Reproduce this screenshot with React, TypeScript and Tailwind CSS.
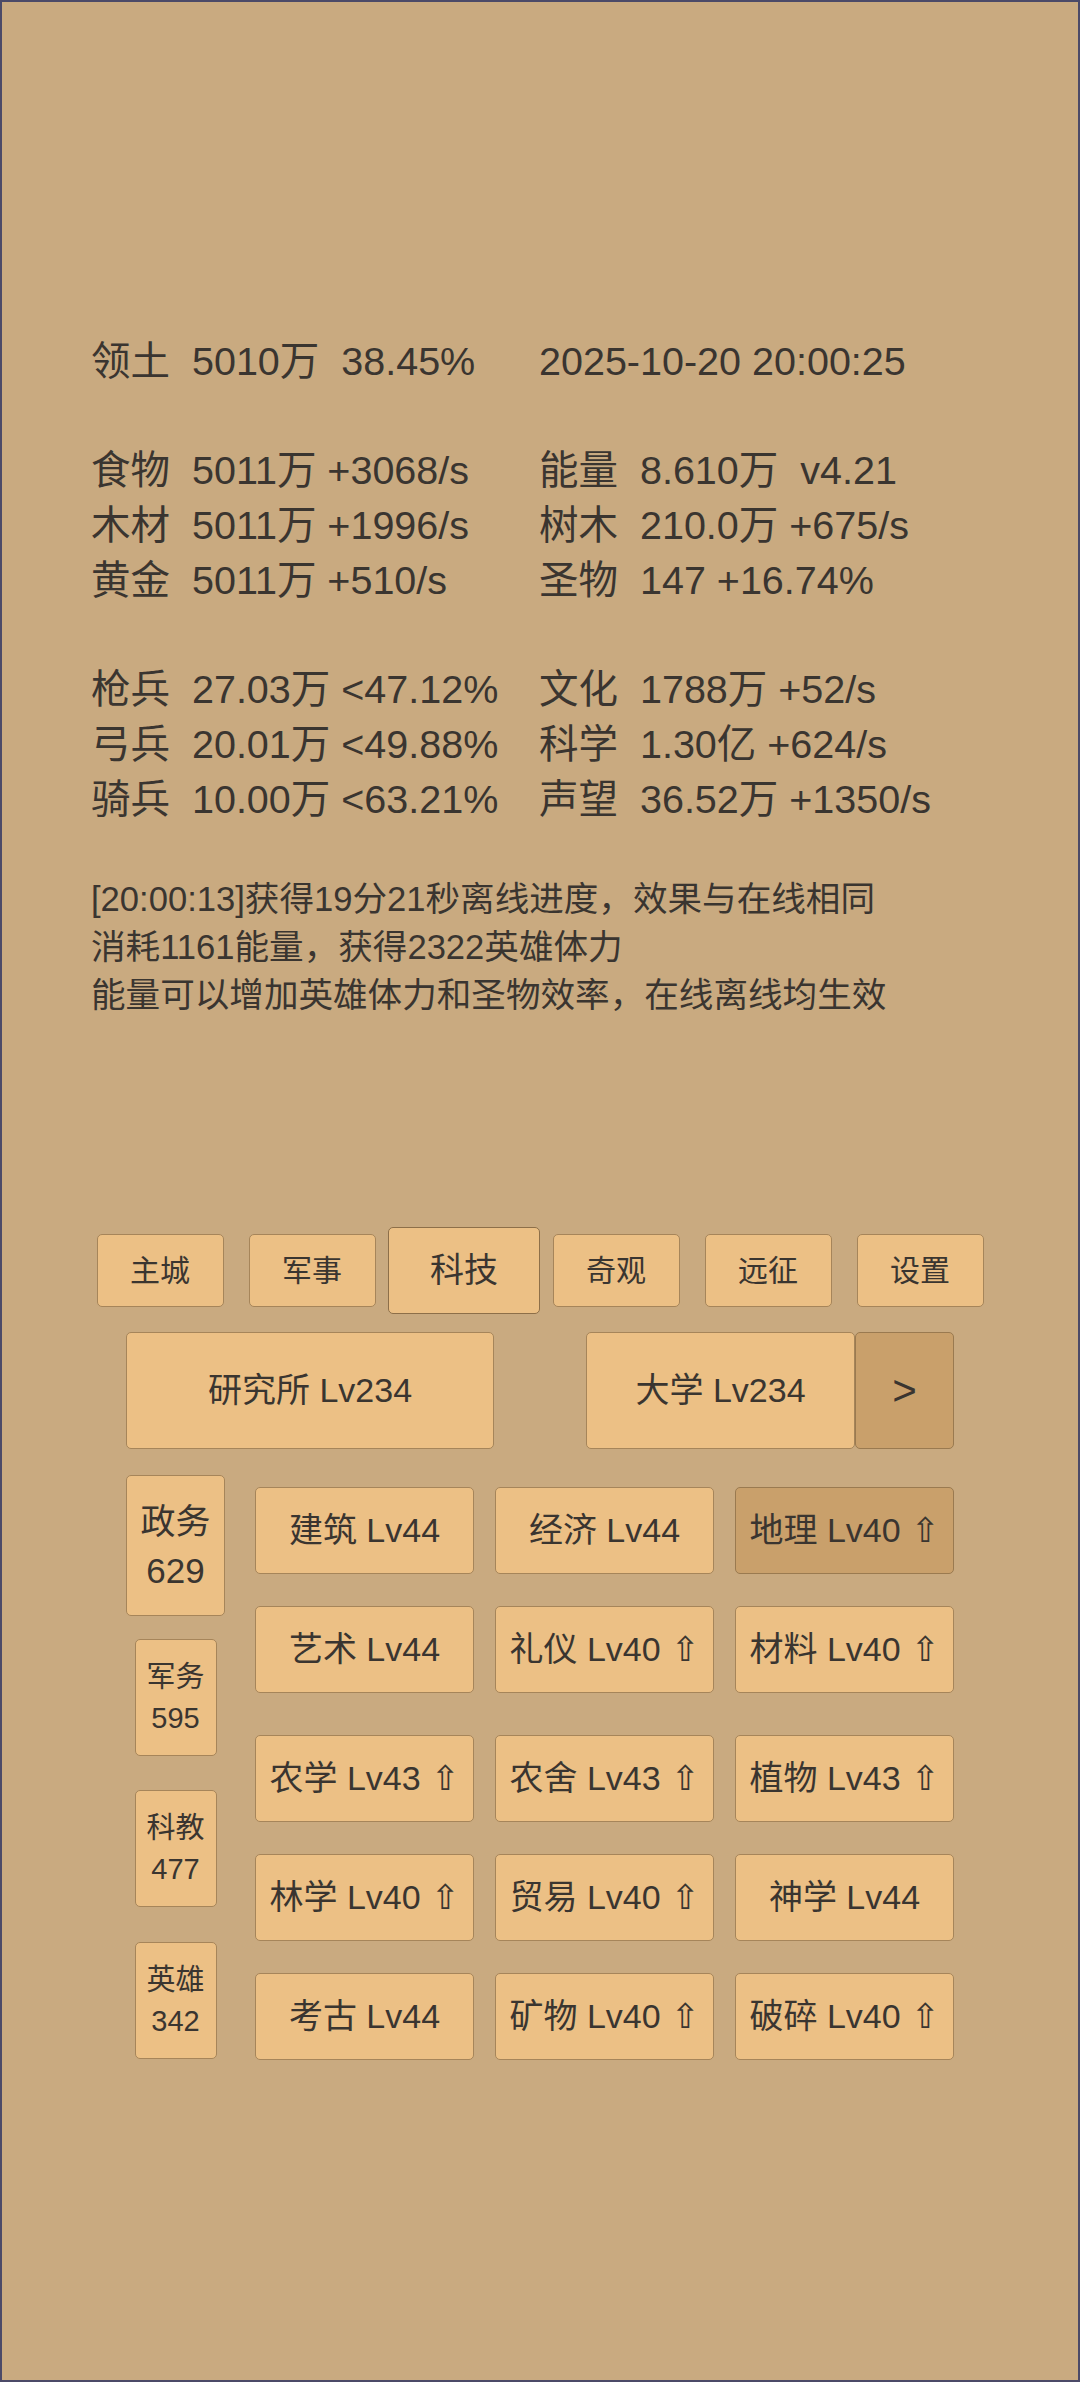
import React from 'react';

const leftStats = [
  '领土  5010万  38.45%',
  '',
  '食物  5011万 +3068/s',
  '木材  5011万 +1996/s',
  '黄金  5011万 +510/s',
  '',
  '枪兵  27.03万 <47.12%',
  '弓兵  20.01万 <49.88%',
  '骑兵  10.00万 <63.21%',
];

const rightStats = [
  '2025-10-20 20:00:25',
  '',
  '能量  8.610万  v4.21',
  '树木  210.0万 +675/s',
  '圣物  147 +16.74%',
  '',
  '文化  1788万 +52/s',
  '科学  1.30亿 +624/s',
  '声望  36.52万 +1350/s',
];

const logs = [
  '[20:00:13]获得19分21秒离线进度，效果与在线相同',
  '消耗1161能量，获得2322英雄体力',
  '能量可以增加英雄体力和圣物效率，在线离线均生效',
];

const tabs = ['主城', '军事', '科技', '奇观', '远征', '设置'];

type Tech = { name: string; up?: boolean; dark?: boolean };

const techRows: Tech[][] = [
  [{ name: '建筑 Lv44' }, { name: '经济 Lv44' }, { name: '地理 Lv40', up: true, dark: true }],
  [{ name: '艺术 Lv44' }, { name: '礼仪 Lv40', up: true }, { name: '材料 Lv40', up: true }],
  [{ name: '农学 Lv43', up: true }, { name: '农舍 Lv43', up: true }, { name: '植物 Lv43', up: true }],
  [{ name: '林学 Lv40', up: true }, { name: '贸易 Lv40', up: true }, { name: '神学 Lv44' }],
  [{ name: '考古 Lv44' }, { name: '矿物 Lv40', up: true }, { name: '破碎 Lv40', up: true }],
];

const rowGaps = ['mt-0', 'mt-[32px]', 'mt-[42px]', 'mt-[32px]', 'mt-[32px]'];

// base button look, background is set per button
const btn = 'flex items-center justify-center border-[1.5px] rounded-[5px]';
const light = 'bg-[#ecc085] border-[#a6855a]';
const dark = 'bg-[#c9a06b] border-[#9a7a50]';

function TechButton({ t }: { t: Tech }) {
  return (
    <div className={`${btn} ${t.dark ? dark : light} h-[87px] text-[34px] whitespace-pre`}>
      {t.name}
      {t.up && <span className="font-['DejaVu_Sans',sans-serif] font-light">{' ⇧'}</span>}
    </div>
  );
}

export default function App() {
  return (
    <div className="w-[1080px] h-[2382px] bg-[#c9aa80] border-2 border-[#4b4a68] text-[#3a3530] font-['Liberation_Sans','Noto_Sans_CJK_SC',sans-serif] overflow-hidden">
      {/* stats */}
      <div className="pt-[332px] pl-[89px] grid grid-cols-[448px_1fr] text-[39.5px] leading-[54.7px] whitespace-pre">
        <div>
          {leftStats.map((s, i) => (
            <div key={i} className="h-[54.7px]">{s}</div>
          ))}
        </div>
        <div>
          {rightStats.map((s, i) => (
            <div key={i} className="h-[54.7px]">{s}</div>
          ))}
        </div>
      </div>

      {/* log */}
      <div className="mt-[49px] pl-[89px] text-[34.6px] leading-[48px]">
        {logs.map((l, i) => (
          <div key={i}>{l}</div>
        ))}
      </div>

      {/* tabs */}
      <div className="mt-[208px] mx-auto w-[912px] grid grid-cols-6 items-center h-[87px]">
        {tabs.map((t) =>
          t === '科技' ? (
            <div key={t} className="flex justify-center">
              <div className={`${btn} bg-[#ecc085] border-[#8d6f49] w-[154px] h-[87px] text-[34px]`}>{t}</div>
            </div>
          ) : (
            <div key={t} className="flex justify-center">
              <div className={`${btn} ${light} w-[127px] h-[73px] text-[30px]`}>{t}</div>
            </div>
          )
        )}
      </div>

      {/* buildings */}
      <div className="mt-[18px] mx-auto w-[828px] grid grid-cols-2 gap-[92px]">
        <div className={`${btn} ${light} h-[117px] text-[34px]`}>研究所 Lv234</div>
        <div className="flex">
          <div className={`${btn} ${light} w-[269px] h-[117px] text-[34px]`}>大学 Lv234</div>
          <div className={`${btn} ${dark} w-[99px] h-[117px] text-[42px]`}>&gt;</div>
        </div>
      </div>

      {/* tech area */}
      <div className="mt-[26px] mx-auto w-[828px] flex gap-[30px]">
        <div className="w-[99px] flex flex-col items-center">
          <div className={`${btn} ${light} flex-col w-[99px] h-[141px] text-[35px] leading-[49px]`}>
            <span>政务</span>
            <span>629</span>
          </div>
          <div className={`${btn} ${light} flex-col mt-[23px] w-[82px] h-[117px] text-[29px] leading-[41px]`}>
            <span>军务</span>
            <span>595</span>
          </div>
          <div className={`${btn} ${light} flex-col mt-[34px] w-[82px] h-[117px] text-[29px] leading-[41px]`}>
            <span>科教</span>
            <span>477</span>
          </div>
          <div className={`${btn} ${light} flex-col mt-[35px] w-[82px] h-[117px] text-[29px] leading-[41px]`}>
            <span>英雄</span>
            <span>342</span>
          </div>
        </div>
        <div className="flex-1 pt-[12px] flex flex-col">
          {techRows.map((row, i) => (
            <div key={i} className={`grid grid-cols-3 gap-x-[21px] ${rowGaps[i]}`}>
              {row.map((t) => (
                <TechButton key={t.name} t={t} />
              ))}
            </div>
          ))}
        </div>
      </div>
    </div>
  );
}
